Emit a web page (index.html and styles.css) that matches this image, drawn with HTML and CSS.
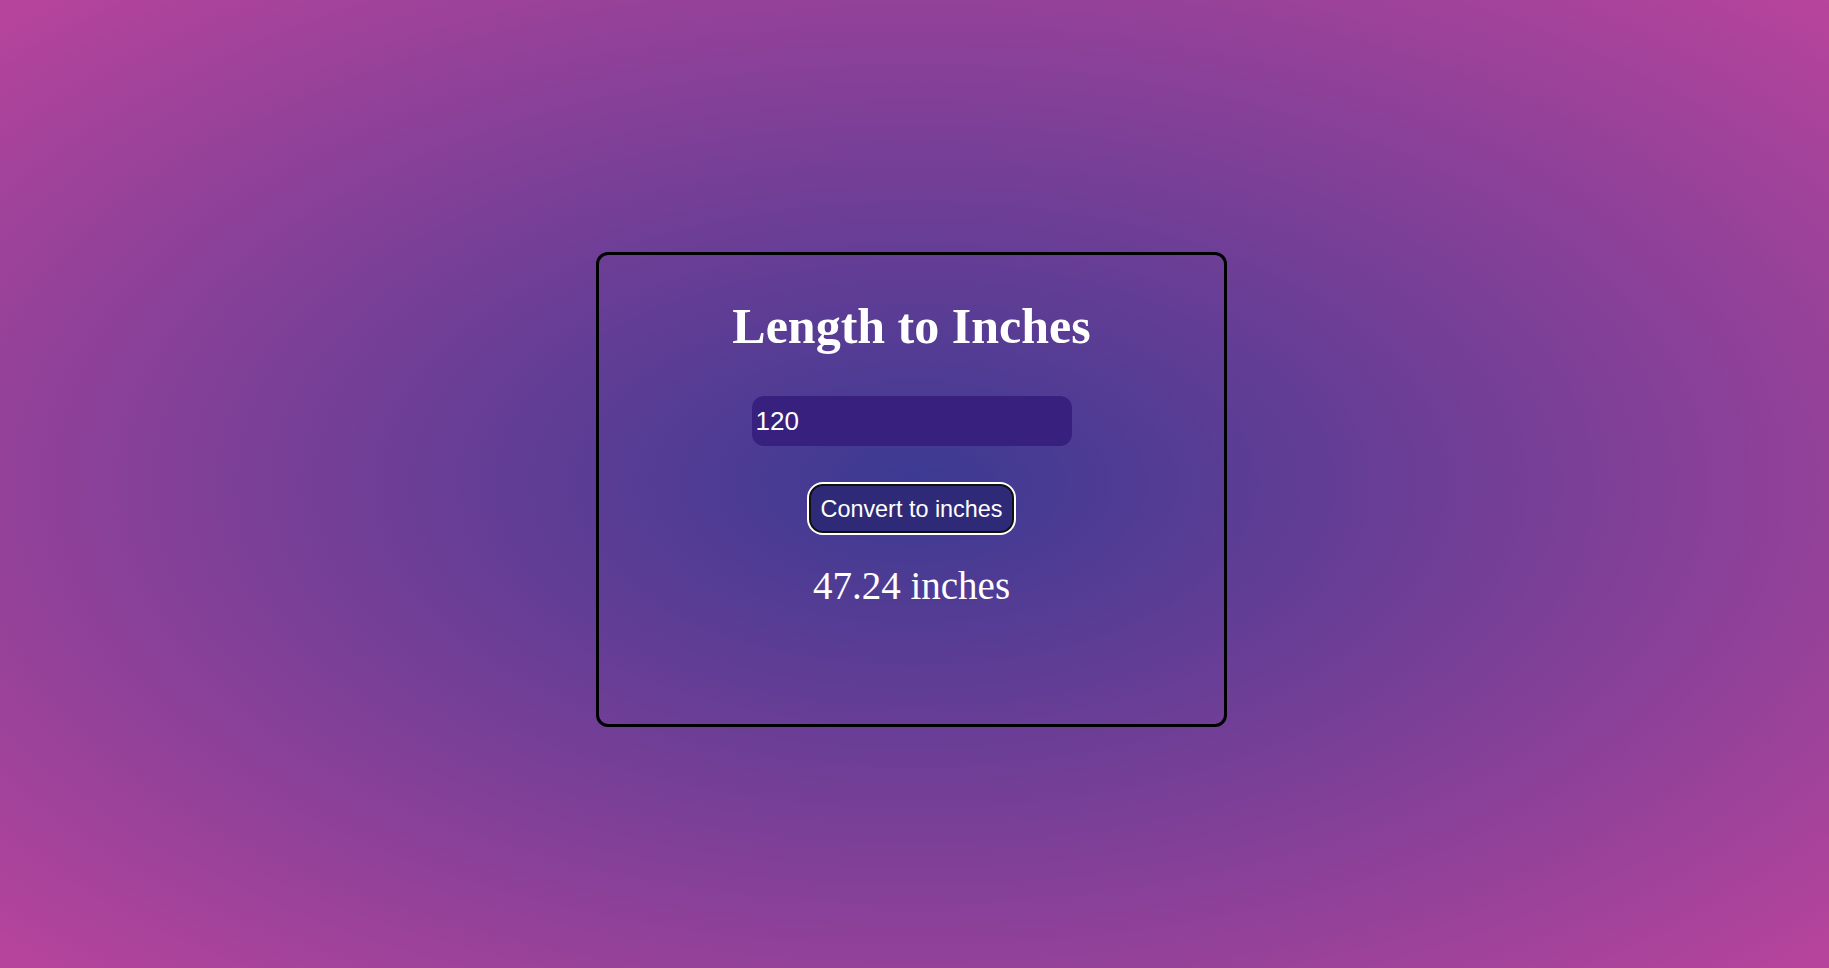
FILE: index.html
```
<!DOCTYPE html>
<html lang="en">
<head>
<meta charset="utf-8">
<title>Length to Inches</title>
<link rel="stylesheet" href="styles.css">
</head>
<body>
<main class="page">
  <section class="card">
    <h1 class="title">Length to Inches</h1>
    <input class="length-input" type="text" value="120">
    <button class="convert-btn" type="button">Convert to inches</button>
    <p class="result">47.24 inches</p>
  </section>
</main>
</body>
</html>
```

FILE: styles.css
```
html, body {
  margin: 0;
  padding: 0;
}

body {
  background: radial-gradient(ellipse at 50% 50%, #3b3a92 0%, #b8449c 100%);
  min-height: 100vh;
  font-family: "Liberation Serif", "Times New Roman", serif;
}

.page {
  box-sizing: border-box;
  min-height: 100vh;
  padding: 11px 6px 0 0;
  display: flex;
  align-items: center;
  justify-content: center;
}

.card {
  box-sizing: border-box;
  width: 631px;
  height: 475px;
  border: 3px solid #000;
  border-radius: 12px;
  padding-top: 42px;
  display: flex;
  flex-direction: column;
  align-items: center;
}

.title {
  margin: 0;
  font-size: 50px;
  line-height: 58px;
  font-weight: bold;
  color: #fff;
}

.length-input {
  box-sizing: border-box;
  margin-top: 41px;
  width: 320px;
  height: 50px;
  padding: 0 4px;
  border: none;
  border-radius: 12px;
  background: #38207f;
  color: #fff;
  font-family: "Liberation Sans", Arial, sans-serif;
  font-size: 26px;
  outline: none;
}

.convert-btn {
  box-sizing: border-box;
  margin-top: 38px;
  height: 49px;
  padding: 0 9px;
  border: 2px solid #111;
  border-radius: 14px;
  box-shadow: 0 0 0 2px #fff;
  background: #2f2a78;
  color: #fff;
  font-family: "Liberation Sans", Arial, sans-serif;
  font-size: 23.4px;
  line-height: 26px;
  cursor: pointer;
}

.result {
  margin: 31px 0 0;
  font-size: 39px;
  line-height: 44px;
  color: #fff;
}
```
